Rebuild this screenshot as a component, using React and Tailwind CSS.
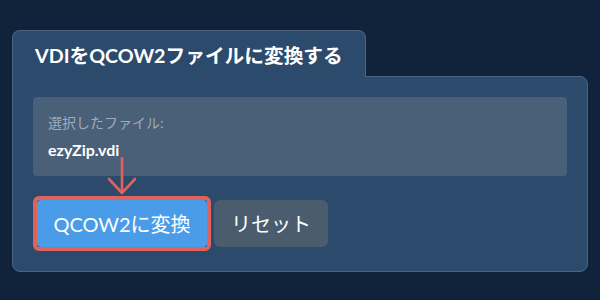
export default function App() {
  const font = { fontFamily: 'Lato, "Noto Sans CJK JP", sans-serif' };
  return (
    <div
      className="relative w-[600px] h-[300px] bg-[#10233a] pt-[30px] pl-[12px] overflow-hidden"
      style={font}
    >
      <div className="relative z-10 w-[354px] h-[47px] -mb-px bg-[#2c4a6b] border border-b-0 border-[#4a6584] rounded-t-lg flex items-center pl-[22px] pt-[3px]">
        <span className="text-[19.7px] font-bold text-white leading-none">
          VDIをQCOW2ファイルに変換する
        </span>
      </div>
      <div className="w-[576px] bg-[#2c4a6b] border border-[#4a6584] rounded-b-lg rounded-tr-lg p-5">
        <div className="h-[79px] bg-[#4a5f78] rounded pl-[15px] pt-[17px]">
          <div className="text-[14px] leading-[18px] text-[#9eabba]">選択したファイル:</div>
          <div className="mt-[9px] text-[16px] leading-[18px] font-bold text-white">ezyZip.vdi</div>
        </div>
        <div className="mt-5 flex items-center gap-[3px]">
          <div className="border-4 border-[#e0625c] rounded-md">
            <button className="h-[47px] w-[170px] bg-[#4a9be8] text-white text-[20px] font-normal flex items-center justify-center rounded-sm">
              QCOW2に変換
            </button>
          </div>
          <button className="h-[47px] w-[114px] bg-[#4b5c6f] text-white text-[20px] rounded-md flex items-center justify-center">
            リセット
          </button>
        </div>
      </div>
      <svg
        className="absolute left-[105px] top-[156px]"
        width="34"
        height="40"
        viewBox="0 0 34 40"
        fill="none"
      >
        <path
          d="M17 2 V37 M4 23 L17 37 L30 23"
          stroke="#e0625c"
          strokeWidth="2.6"
          strokeLinecap="round"
          strokeLinejoin="round"
        />
      </svg>
    </div>
  );
}
